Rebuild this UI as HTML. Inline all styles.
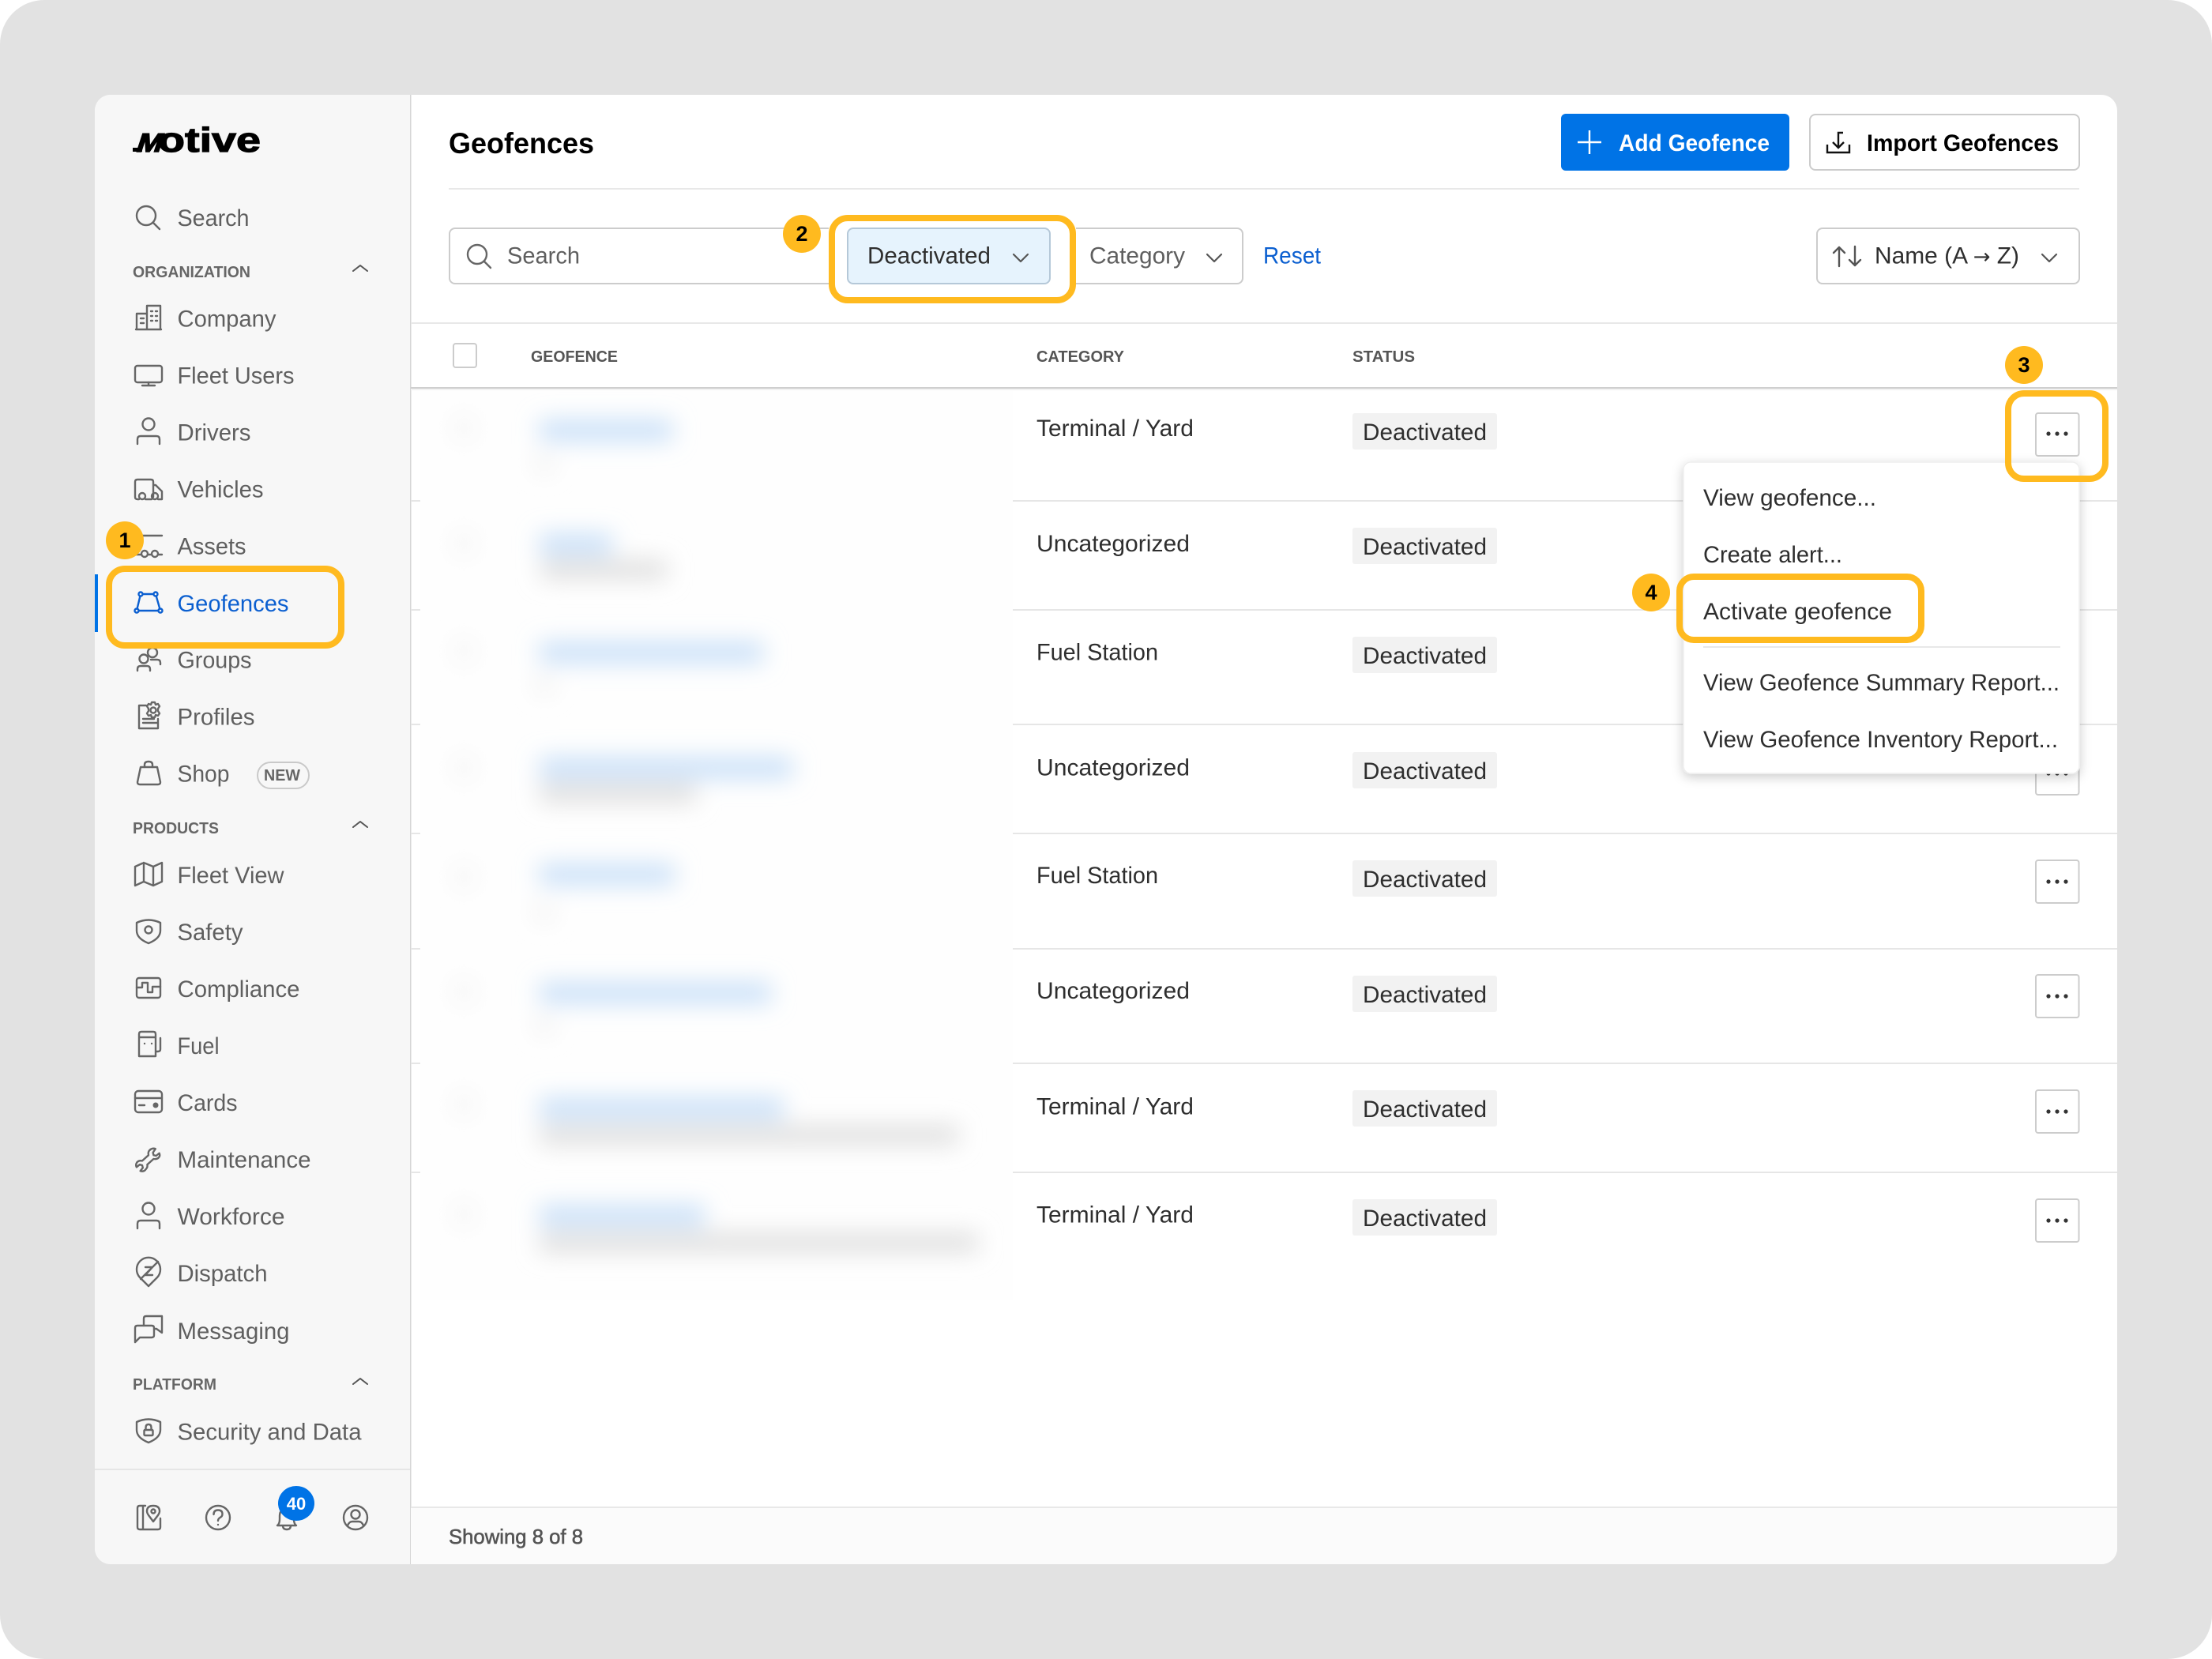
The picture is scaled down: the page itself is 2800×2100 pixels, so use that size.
<!DOCTYPE html>
<html lang="en"><head><meta charset="utf-8"><title>Geofences</title>
<style>
html,body{margin:0;padding:0;background:#fff}
svg{display:block;font-family:"Liberation Sans",sans-serif}
.n{font-size:30px;fill:#5f5f5f}
.s{font-size:20px;font-weight:700;fill:#666}
.d{font-size:30px;fill:#2e2e2e}
.b{font-size:30px;font-weight:700}
.i{fill:none;stroke:#666;stroke-width:2.4;stroke-linecap:round;stroke-linejoin:round}
.c{fill:none;stroke:#555;stroke-width:2.2;stroke-linecap:round;stroke-linejoin:round}
.y{fill:none;stroke:#ffba1f;stroke-width:8}
.t{font-size:27px;font-weight:700;fill:#000;text-anchor:middle}
</style></head><body>
<svg xmlns="http://www.w3.org/2000/svg" width="2800" height="2100" viewBox="0 0 2800 2100">
<defs>
<filter id="bl" filterUnits="userSpaceOnUse" x="520" y="490" width="800" height="1150"><feGaussianBlur stdDeviation="15"/></filter>
<filter id="sh" x="-10%" y="-10%" width="120%" height="125%"><feDropShadow dx="0" dy="4" stdDeviation="7" flood-color="#000" flood-opacity=".2"/></filter>
</defs>
<rect width="2800" height="2100" fill="#fff"/>
<rect width="2800" height="2100" rx="56" fill="#e2e2e2"/>
<rect x="120" y="120" width="2560" height="1860" rx="20" fill="#fff"/>
<!-- sidebar -->
<path d="M519 120H140a20 20 0 0 0-20 20V1960a20 20 0 0 0 20 20H519Z" fill="#f7f7f7"/>
<rect x="519" y="120" width="1.500" height="1860" fill="#d6d6d6"/>
<rect x="120" y="1859" width="399" height="2" fill="#e6e6e6"/>
<!-- logo -->
<rect x="168" y="187" width="12" height="5" fill="#000"/>
<text transform="translate(171,192) skewX(-18)" font-size="33" font-weight="700" stroke="#000" stroke-width="1.600" textLength="32" lengthAdjust="spacingAndGlyphs">M</text>
<text x="200" y="192" font-size="44" font-weight="700" stroke="#000" stroke-width="1.200" textLength="130" lengthAdjust="spacingAndGlyphs">otive</text>

<!-- nav text -->
<text class="n" x="224.500" y="286" textLength="91" lengthAdjust="spacingAndGlyphs">Search</text>
<text class="s" x="168" y="351" textLength="149" lengthAdjust="spacingAndGlyphs">ORGANIZATION</text>
<text class="n" x="224.500" y="413.500" textLength="125" lengthAdjust="spacingAndGlyphs">Company</text>
<text class="n" x="224.500" y="485.500" textLength="148" lengthAdjust="spacingAndGlyphs">Fleet Users</text>
<text class="n" x="224.500" y="557.500" textLength="93" lengthAdjust="spacingAndGlyphs">Drivers</text>
<text class="n" x="224.500" y="629.500" textLength="109" lengthAdjust="spacingAndGlyphs">Vehicles</text>
<text class="n" x="224.500" y="701.500" textLength="87" lengthAdjust="spacingAndGlyphs">Assets</text>
<text class="n" x="224.500" y="774" textLength="141" lengthAdjust="spacingAndGlyphs" style="fill:#0b5fd0">Geofences</text>
<text class="n" x="224.500" y="845.500" textLength="94" lengthAdjust="spacingAndGlyphs">Groups</text>
<text class="n" x="224.500" y="917.500" textLength="98" lengthAdjust="spacingAndGlyphs">Profiles</text>
<text class="n" x="224.500" y="989.500" textLength="66" lengthAdjust="spacingAndGlyphs">Shop</text>
<rect x="326" y="965" width="65" height="33" rx="16.5" fill="none" stroke="#c9c9c9" stroke-width="2"/>
<text x="334" y="988" font-size="20" font-weight="700" fill="#666" textLength="46" lengthAdjust="spacingAndGlyphs">NEW</text>
<text class="s" x="168" y="1055" textLength="109" lengthAdjust="spacingAndGlyphs">PRODUCTS</text>
<text class="n" x="224.500" y="1118" textLength="135" lengthAdjust="spacingAndGlyphs">Fleet View</text>
<text class="n" x="224.500" y="1190" textLength="83" lengthAdjust="spacingAndGlyphs">Safety</text>
<text class="n" x="224.500" y="1262" textLength="155" lengthAdjust="spacingAndGlyphs">Compliance</text>
<text class="n" x="224.500" y="1334" textLength="53" lengthAdjust="spacingAndGlyphs">Fuel</text>
<text class="n" x="224.500" y="1406" textLength="76" lengthAdjust="spacingAndGlyphs">Cards</text>
<text class="n" x="224.500" y="1478" textLength="169" lengthAdjust="spacingAndGlyphs">Maintenance</text>
<text class="n" x="224.500" y="1550" textLength="136" lengthAdjust="spacingAndGlyphs">Workforce</text>
<text class="n" x="224.500" y="1622" textLength="114" lengthAdjust="spacingAndGlyphs">Dispatch</text>
<text class="n" x="224.500" y="1695" textLength="142" lengthAdjust="spacingAndGlyphs">Messaging</text>
<text class="s" x="168" y="1759" textLength="106" lengthAdjust="spacingAndGlyphs">PLATFORM</text>
<text class="n" x="224.500" y="1822.500" textLength="233" lengthAdjust="spacingAndGlyphs">Security and Data</text>

<!-- section chevrons -->
<path class="c" d="M447 343l9-7 9 7M447 1047l9-7 9 7M447 1752l9-7 9 7" style="stroke-width:2"/>

<!-- nav icons -->
<g class="i">
<circle cx="185" cy="273" r="12"/><path d="M194 282l8 8"/>
<path d="M173 417V397h13M186 417V387h17v30M172 417h32M178 403h4M178 409h4M191 394h2M197 394h2M191 400h2M197 400h2M191 406h2M197 406h2"/>
<rect x="171" y="463" width="34" height="21" rx="3"/><path d="M188 484v4M180 488h16"/>
<circle cx="188" cy="537" r="7.5"/><path d="M174 562v-6q0-4 4-4h20q4 0 4 4v6"/>
<path d="M176 632h-2q-3 0-3-3v-19q0-3 3-3h17q3 0 3 3v19M184 632h8M200 632h5v-10l-8-8h-3"/><circle cx="180" cy="628" r="4"/><circle cx="196" cy="628" r="4"/>
<path d="M171 678h34M171 702h8M187 702h5M200 702h5"/><circle cx="183" cy="701" r="4"/><circle cx="196" cy="701" r="4"/>
<circle cx="182" cy="834" r="5.5"/><path d="M174 849v-2q0-4 4-4h8q4 0 4 4v2"/><circle cx="193" cy="826" r="6"/><path d="M191 835h8q4 0 4 4v2"/>
<path d="M185 893h-9v29h24v-12M181 910h14M181 915h19"/><circle cx="194" cy="899" r="3.5"/><path d="M192 889h4l1 3 3-1 2 3-2 3v3l2 3-2 3-3-1-1 3h-4l-1-3-3 1-2-3 2-3v-3l-2-3 2-3 3 1z"/>
<path d="M178 971h21l4 19q0 3-3 3h-23q-3 0-3-3z"/><path d="M183 971v-3q0-4 5-4t5 4v3"/>
<path d="M171 1097l11-5 12 5 11-5v24l-11 5-12-5-11 5zM182 1092v24M194 1097v24"/>
<path d="M173 1168q15-7 30 0v10q0 10-15 16-15-6-15-16z"/><circle cx="188" cy="1177" r="4.5"/>
<rect x="173" y="1238" width="30" height="25" rx="3"/><path d="M173 1250h7v-6h7v12h6v-7h10"/>
<path d="M176 1337v-28q0-3 3-3h15q3 0 3 3v28zM176 1313h21M197 1331h3q3 0 3-3v-14"/><path d="M183 1321h.01M192 1321h.01"/>
<rect x="171" y="1381" width="34" height="27" rx="4"/><path d="M171 1390h34M176 1399h7"/>
<path transform="translate(188,1467) scale(.8) translate(-187,-1468)" d="M204 1459l-5 4-4-1-1-4 4-6q-6-2-10 3-2 3-1 7l-10 9q-5-1-8 2-3 4-1 8l5-4 4 1 1 4-4 5q6 2 9-3 3-3 2-7l10-9q5 1 8-2 3-3 1-7z" style="stroke-width:3"/>
<circle cx="188" cy="1530" r="7.5"/><path d="M174 1555v-6q0-4 4-4h20q4 0 4 4v6"/>
<path d="M188 1628l-11-11a15 15 0 1 1 22 0zM178 1619l22-22M184 1604h9l-9 10h9"/>
<path d="M182 1678v-9q0-3 3-3h20v21l-7-5h-3"/><path d="M174 1678h18q3 0 3 3v9q0 3-3 3h-15l-6 6v-18q0-3 3-3z"/>
<path d="M173 1800q15-7 30 0v10q0 10-15 16-15-6-15-16z"/><rect x="182.500" y="1810" width="11" height="7" rx="1"/><path d="M184.500 1810v-3q0-4 3.500-4t3.500 4v3"/>
<path d="M184 1906h-7q-3 0-3 3v24q0 3 3 3h23q3 0 3-3v-11M181 1906v30"/><path d="M194 1928l-6-8q-2-3-2-5 0-7 8-7t8 7q0 2-2 5z" transform="translate(0,-2)"/><circle cx="194" cy="1913" r="2.500"/>
<circle cx="276" cy="1921" r="15"/><path d="M270.500 1917q0-5.500 5.500-5.500t5.500 5q0 3-3 4.500-2.500 1.500-2.500 4"/><path d="M276 1930h.01"/>
<path d="M351 1931q3-2 3-8v-4q0-9 9-9t9 9v4q0 6 3 8zM358 1931q0 5 5 5t5-5"/>
<circle cx="450" cy="1921" r="15"/><circle cx="450" cy="1917" r="5.500"/><path d="M440 1931q2-5 6-5h8q4 0 6 5"/>
</g>
<path d="M178 752h19l6 21h-30z" fill="none" stroke="#0b5fd0" stroke-width="2.400"/>
<g fill="#f7f7f7" stroke="#0b5fd0" stroke-width="2.400"><circle cx="178" cy="752" r="2.500"/><circle cx="197" cy="752" r="2.500"/><circle cx="203" cy="773" r="2.500"/><circle cx="173" cy="773" r="2.500"/></g>
<circle cx="197" cy="1399" r="3.500" fill="#666"/>
<rect x="120" y="727" width="4" height="73" fill="#0073e6"/>
<ellipse cx="375" cy="1903" rx="23" ry="22" fill="#0073e6"/>
<text x="375" y="1911" font-size="22" font-weight="700" fill="#fff" text-anchor="middle">40</text>

<!-- header -->
<text x="568" y="194" font-size="37" font-weight="700" fill="#000" textLength="184" lengthAdjust="spacingAndGlyphs">Geofences</text>
<rect x="1976" y="144" width="289" height="72" rx="6" fill="#0073e6"/>
<path d="M2012 165v30M1997 180h30" stroke="#fff" stroke-width="2.400" fill="none"/>
<text class="b" x="2049" y="191" fill="#fff" textLength="191" lengthAdjust="spacingAndGlyphs">Add Geofence</text>
<rect x="2291" y="145" width="341" height="70" rx="7" fill="#fff" stroke="#ccc" stroke-width="2"/>
<path d="M2313 183v10h28v-10M2333 168h-6v18M2320 180l7 7 7-7" fill="none" stroke="#111" stroke-width="2.400"/>
<text class="b" x="2363" y="191" fill="#000" textLength="243" lengthAdjust="spacingAndGlyphs">Import Geofences</text>
<rect x="568" y="238" width="2064" height="2" fill="#e8e8e8"/>

<!-- filters -->
<rect x="569" y="289" width="1004" height="70" rx="7" fill="#fff" stroke="#ccc" stroke-width="2"/>
<circle cx="604" cy="322" r="12" class="i"/><path class="i" d="M613 331l8 8"/>
<text class="n" x="642" y="333.500" textLength="92" lengthAdjust="spacingAndGlyphs">Search</text>
<rect x="1049" y="272" width="313" height="112" fill="#fff"/>
<rect x="1073" y="289" width="256" height="70" rx="7" fill="#e6f3fd" stroke="#b5c8d8" stroke-width="2"/>
<text class="d" x="1098" y="333.500" textLength="156" lengthAdjust="spacingAndGlyphs">Deactivated</text>
<path class="c" d="M1283 322l9 9 9-9"/>
<text class="n" x="1379" y="333.500" textLength="121" lengthAdjust="spacingAndGlyphs">Category</text>
<path class="c" d="M1528 322l9 9 9-9"/>
<text class="d" x="1599" y="333.500" textLength="73" lengthAdjust="spacingAndGlyphs" style="fill:#0b5fd0">Reset</text>
<rect x="2300" y="289" width="332" height="70" rx="7" fill="#fff" stroke="#ccc" stroke-width="2"/>
<path d="M2328 337v-24M2321 320l7-7 7 7M2348 312v24M2341 329l7 7 7-7" class="i" style="stroke:#555"/>
<text class="d" x="2373" y="333.500" textLength="183" lengthAdjust="spacingAndGlyphs">Name (A <tspan style="font-family:'DejaVu Sans',sans-serif;font-size:26px">→</tspan> Z)</text>
<path class="c" d="M2585 322l9 9 9-9"/>

<!-- table header -->
<rect x="520" y="408" width="2160" height="2" fill="#e8e8e8"/>
<rect x="574" y="435" width="29" height="30" rx="3" fill="#fff" stroke="#ccc" stroke-width="2"/>
<text class="s" x="672" y="458" textLength="110" lengthAdjust="spacingAndGlyphs" style="fill:#555">GEOFENCE</text>
<text class="s" x="1312" y="458" textLength="111" lengthAdjust="spacingAndGlyphs" style="fill:#555">CATEGORY</text>
<text class="s" x="1712" y="458" textLength="79" lengthAdjust="spacingAndGlyphs" style="fill:#555">STATUS</text>
<rect x="520" y="490" width="2160" height="2.500" fill="#cfcfcf"/>
<rect x="520" y="492" width="2160" height="2" fill="#f2f2f2"/>

<!-- row lines -->
<g fill="#e6e6e6"><rect x="520" y="633" width="2160" height="2"/><rect x="520" y="771" width="2160" height="2"/><rect x="520" y="916" width="2160" height="2"/><rect x="520" y="1054" width="2160" height="2"/><rect x="520" y="1200" width="2160" height="2"/><rect x="520" y="1345" width="2160" height="2"/><rect x="520" y="1483" width="2160" height="2"/></g>
<rect x="532" y="495" width="750" height="1150" fill="#fefefe"/>

<!-- blurred cells -->
<g filter="url(#bl)">
<g fill="#f6f6f6"><rect x="574" y="527" width="26" height="30" /><rect x="574" y="673" width="26" height="30"/><rect x="574" y="809" width="26" height="30"/><rect x="574" y="957" width="26" height="30"/><rect x="574" y="1095" width="26" height="30"/><rect x="574" y="1240" width="26" height="30"/><rect x="574" y="1383" width="26" height="30"/><rect x="574" y="1522" width="26" height="30"/></g>
<g fill="#c8dff8">
<rect x="683" y="532" width="168" height="26"/>
<rect x="683" y="676" width="92" height="26"/>
<rect x="683" y="813" width="283" height="26"/>
<rect x="683" y="959" width="320" height="26"/>
<rect x="683" y="1094" width="171" height="26"/>
<rect x="683" y="1244" width="293" height="26"/>
<rect x="683" y="1390" width="309" height="26"/>
<rect x="683" y="1526" width="209" height="26"/>
</g>
<g fill="#dedede">
<rect x="685" y="709" width="159" height="24"/>
<rect x="683" y="992" width="198" height="24"/>
<rect x="683" y="1425" width="530" height="24"/>
<rect x="683" y="1561" width="555" height="24"/>
</g>
<g fill="#f0f0f0"><rect x="678" y="576" width="22" height="22"/><rect x="678" y="856" width="22" height="22"/><rect x="678" y="1144" width="22" height="22"/><rect x="678" y="1287" width="22" height="22"/></g>
</g>

<!-- categories -->
<text class="d" x="1312" y="552" textLength="199" lengthAdjust="spacingAndGlyphs">Terminal / Yard</text>
<text class="d" x="1312" y="698" textLength="194" lengthAdjust="spacingAndGlyphs">Uncategorized</text>
<text class="d" x="1312" y="835.500" textLength="154" lengthAdjust="spacingAndGlyphs">Fuel Station</text>
<text class="d" x="1312" y="981.500" textLength="194" lengthAdjust="spacingAndGlyphs">Uncategorized</text>
<text class="d" x="1312" y="1118" textLength="154" lengthAdjust="spacingAndGlyphs">Fuel Station</text>
<text class="d" x="1312" y="1264" textLength="194" lengthAdjust="spacingAndGlyphs">Uncategorized</text>
<text class="d" x="1312" y="1410.500" textLength="199" lengthAdjust="spacingAndGlyphs">Terminal / Yard</text>
<text class="d" x="1312" y="1547.500" textLength="199" lengthAdjust="spacingAndGlyphs">Terminal / Yard</text>

<!-- statuses -->
<g fill="#f2f2f2"><rect x="1712" y="523" width="183" height="46" rx="3"/><rect x="1712" y="668" width="183" height="46" rx="3"/><rect x="1712" y="806" width="183" height="46" rx="3"/><rect x="1712" y="952" width="183" height="46" rx="3"/><rect x="1712" y="1089" width="183" height="46" rx="3"/><rect x="1712" y="1235" width="183" height="46" rx="3"/><rect x="1712" y="1380" width="183" height="46" rx="3"/><rect x="1712" y="1518" width="183" height="46" rx="3"/></g>
<text class="d" x="1725" y="557" textLength="157" lengthAdjust="spacingAndGlyphs">Deactivated</text>
<text class="d" x="1725" y="702" textLength="157" lengthAdjust="spacingAndGlyphs">Deactivated</text>
<text class="d" x="1725" y="840" textLength="157" lengthAdjust="spacingAndGlyphs">Deactivated</text>
<text class="d" x="1725" y="986" textLength="157" lengthAdjust="spacingAndGlyphs">Deactivated</text>
<text class="d" x="1725" y="1123" textLength="157" lengthAdjust="spacingAndGlyphs">Deactivated</text>
<text class="d" x="1725" y="1269" textLength="157" lengthAdjust="spacingAndGlyphs">Deactivated</text>
<text class="d" x="1725" y="1414" textLength="157" lengthAdjust="spacingAndGlyphs">Deactivated</text>
<text class="d" x="1725" y="1552" textLength="157" lengthAdjust="spacingAndGlyphs">Deactivated</text>

<!-- action buttons -->
<g fill="#fff" stroke="#ccc" stroke-width="2"><rect x="2577" y="523" width="54.500" height="54" rx="3"/><rect x="2577" y="952" width="54.500" height="54" rx="3"/><rect x="2577" y="1089" width="54.500" height="54" rx="3"/><rect x="2577" y="1234" width="54.500" height="54" rx="3"/><rect x="2577" y="1380" width="54.500" height="54" rx="3"/><rect x="2577" y="1518" width="54.500" height="54" rx="3"/></g>
<g fill="#333">
<circle cx="2593" cy="549" r="2.600"/><circle cx="2604" cy="549" r="2.600"/><circle cx="2615" cy="549" r="2.600"/>
<circle cx="2593" cy="979" r="2.600"/><circle cx="2604" cy="979" r="2.600"/><circle cx="2615" cy="979" r="2.600"/>
<circle cx="2593" cy="1116" r="2.600"/><circle cx="2604" cy="1116" r="2.600"/><circle cx="2615" cy="1116" r="2.600"/>
<circle cx="2593" cy="1261" r="2.600"/><circle cx="2604" cy="1261" r="2.600"/><circle cx="2615" cy="1261" r="2.600"/>
<circle cx="2593" cy="1407" r="2.600"/><circle cx="2604" cy="1407" r="2.600"/><circle cx="2615" cy="1407" r="2.600"/>
<circle cx="2593" cy="1545" r="2.600"/><circle cx="2604" cy="1545" r="2.600"/><circle cx="2615" cy="1545" r="2.600"/>
</g>

<!-- footer -->
<path d="M520 1908H2680V1960a20 20 0 0 1-20 20H520Z" fill="#fbfbfb"/>
<rect x="520" y="1907" width="2160" height="2" fill="#e8e8e8"/>
<text x="568" y="1954" font-size="26" fill="#555" textLength="170" lengthAdjust="spacingAndGlyphs" style="stroke:#555;stroke-width:.6">Showing 8 of 8</text>

<!-- menu -->
<rect x="2131" y="585" width="501" height="394" rx="9" fill="#fff" stroke="#eee" stroke-width="1.500" filter="url(#sh)"/>
<text class="d" x="2156" y="640" textLength="219" lengthAdjust="spacingAndGlyphs">View geofence...</text>
<text class="d" x="2156" y="712" textLength="176" lengthAdjust="spacingAndGlyphs">Create alert...</text>
<text class="d" x="2156" y="784" textLength="239" lengthAdjust="spacingAndGlyphs">Activate geofence</text>
<rect x="2156" y="818" width="452" height="2" fill="#e8e8e8"/>
<text class="d" x="2156" y="874" textLength="451" lengthAdjust="spacingAndGlyphs">View Geofence Summary Report...</text>
<text class="d" x="2156" y="946" textLength="449" lengthAdjust="spacingAndGlyphs">View Geofence Inventory Report...</text>

<!-- highlights -->
<rect x="138" y="720" width="294" height="97" rx="20" class="y"/>
<circle cx="158" cy="684" r="24" fill="#ffba1f"/><text class="t" x="158" y="693">1</text>
<rect x="1053" y="276" width="305" height="104" rx="20" class="y"/>
<circle cx="1015" cy="296" r="24" fill="#ffba1f"/><text class="t" x="1015" y="305">2</text>
<rect x="2542" y="498" width="123" height="108" rx="20" class="y"/>
<circle cx="2562" cy="462" r="24" fill="#ffba1f"/><text class="t" x="2562" y="471">3</text>
<rect x="2126" y="730" width="306" height="80" rx="18" class="y"/>
<circle cx="2090" cy="750" r="24" fill="#ffba1f"/><text class="t" x="2090" y="759">4</text>
</svg>
</body></html>
